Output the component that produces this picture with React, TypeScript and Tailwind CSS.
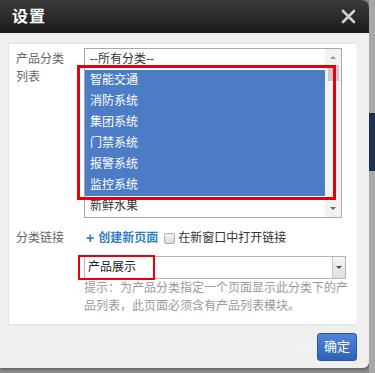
import React from "react";

const font = { fontFamily: '"Liberation Sans", "Noto Sans CJK SC", sans-serif' };

const categories = ["智能交通", "消防系统", "集团系统", "门禁系统", "报警系统", "监控系统"];

const CategoryList = () => {
  return (
    <div className="relative w-[258px] h-[170px] border border-[#a9a9a9] bg-white flex">
      <div className="flex-1 flex flex-col">
        <div className="h-[21px] leading-[21px] pl-[5px] text-[#333]">--所有分类--</div>
        {categories.map((c) => (
          <div key={c} className="h-[21px] leading-[21px] pl-[5px] bg-[#4d7cc6] text-white">
            {c}
          </div>
        ))}
        <div className="h-[21px] leading-[21px] pl-[5px] text-[#333]">新鲜水果</div>
      </div>
      {/* scrollbar */}
      <div className="w-[16px] bg-[#f2f2f2] flex flex-col items-center">
        <div className="h-[16px] flex items-center justify-center">
          <div className="w-0 h-0 border-l-[3px] border-r-[3px] border-b-[3px] border-l-transparent border-r-transparent border-b-[#999]" />
        </div>
        <div className="w-[11px] h-[16px] bg-[#c9c9c9]" />
        <div className="flex-1" />
        <div className="h-[18px] flex items-center justify-center">
          <div className="w-0 h-0 border-l-[3px] border-r-[3px] border-t-[3px] border-l-transparent border-r-transparent border-t-[#666]" />
        </div>
      </div>
      <div className="absolute left-[-8px] top-[16px] w-[259px] h-[135px] border-[3px] border-[#e4000c] pointer-events-none" />
    </div>
  );
};

export default function App() {
  return (
    <div className="w-[375px] h-[373px] bg-[#8a8a8a] flex overflow-hidden text-[12px]" style={font}>
      <div className="w-[369px] h-[368px] flex flex-col bg-[#efefef] rounded-tr-[7px] rounded-br-[6px] overflow-hidden shadow-[1px_1px_3px_rgba(0,0,0,0.4)]">
        <div className="h-[33px] shrink-0 bg-gradient-to-b from-[#3b3b3b] to-[#1c1c1c] flex items-center justify-between pl-[12px] pr-[13px]">
          <span className="text-white text-[16px] font-bold tracking-[1px]">设置</span>
          <svg width="15" height="15" viewBox="0 0 15 15">
            <path d="M2 2 L13 13 M13 2 L2 13" stroke="#d0d0d0" strokeWidth="2.6" strokeLinecap="round" />
          </svg>
        </div>

        <div className="mt-[10px] ml-[8px] w-[349px] h-[282px] bg-white border border-[#e2e2e2] border-r-[#f5f5f5] pt-[4px] pl-[7px] flex flex-col">
          <div className="flex">
            <div className="w-[68px] pt-[2px] leading-[18px] text-[#666]">
              产品分类
              <br />
              列表
            </div>
            <CategoryList />
          </div>

          <div className="flex mt-[12px] leading-[16px]">
            <div className="w-[68px] text-[#666]">分类链接</div>
            <div className="flex items-center">
              <span className="text-[#2f7fc4] font-bold text-[14px] ml-[2px] mr-[4px]">+</span>
              <span className="text-[#2f7fc4] font-bold">创建新页面</span>
              <span className="ml-[6px] mr-[3px] w-[11px] h-[11px] border border-[#aaa] rounded-[2px] bg-gradient-to-b from-[#f4f4f4] to-[#dcdcdc]" />
              <span className="text-[#333]">在新窗口中打开链接</span>
            </div>
          </div>

          <div className="flex mt-[10px]">
            <div className="w-[68px]" />
            <div className="relative w-[262px] h-[23px] border border-[#b5b5b5] bg-white flex">
              <div className="flex-1 leading-[21px] pl-[3px] text-[#222]">产品展示</div>
              <div className="w-[13px] bg-gradient-to-b from-[#f6f6f6] to-[#dedede] border-l border-[#c8c8c8] flex items-center justify-center">
                <div className="w-0 h-0 border-l-[3px] border-r-[3px] border-t-[3px] border-l-transparent border-r-transparent border-t-[#33507a]" />
              </div>
              <div className="absolute left-[-7px] top-[-2px] w-[77px] h-[25px] border-[2px] border-[#e4000c] pointer-events-none" />
            </div>
          </div>

          <div className="flex">
            <div className="w-[68px]" />
            <div className="w-[266px] leading-[18px] text-[#9a9a9a]">
              提示：为产品分类指定一个页面显示此分类下的产品列表，此页面必须含有产品列表模块。
            </div>
          </div>
        </div>

        <div className="flex justify-end pr-[12px] mt-[8px]">
          <div className="relative w-[40px] h-[28px] rounded-[3px] bg-gradient-to-b from-[#4f86d8] to-[#2f62b6] border border-[#2a58a6] flex items-center justify-center text-white text-[13px]">
            确定
            <span className="absolute left-[-34px] top-[5px] text-[11px] text-white/40 whitespace-nowrap">亿速云</span>
          </div>
        </div>
      </div>

      <div className="flex-1 flex flex-col bg-[#a8a8a8]">
        <div className="h-[113px]" />
        <div className="h-[58px] bg-[#1d3150]" />
      </div>
    </div>
  );
}
